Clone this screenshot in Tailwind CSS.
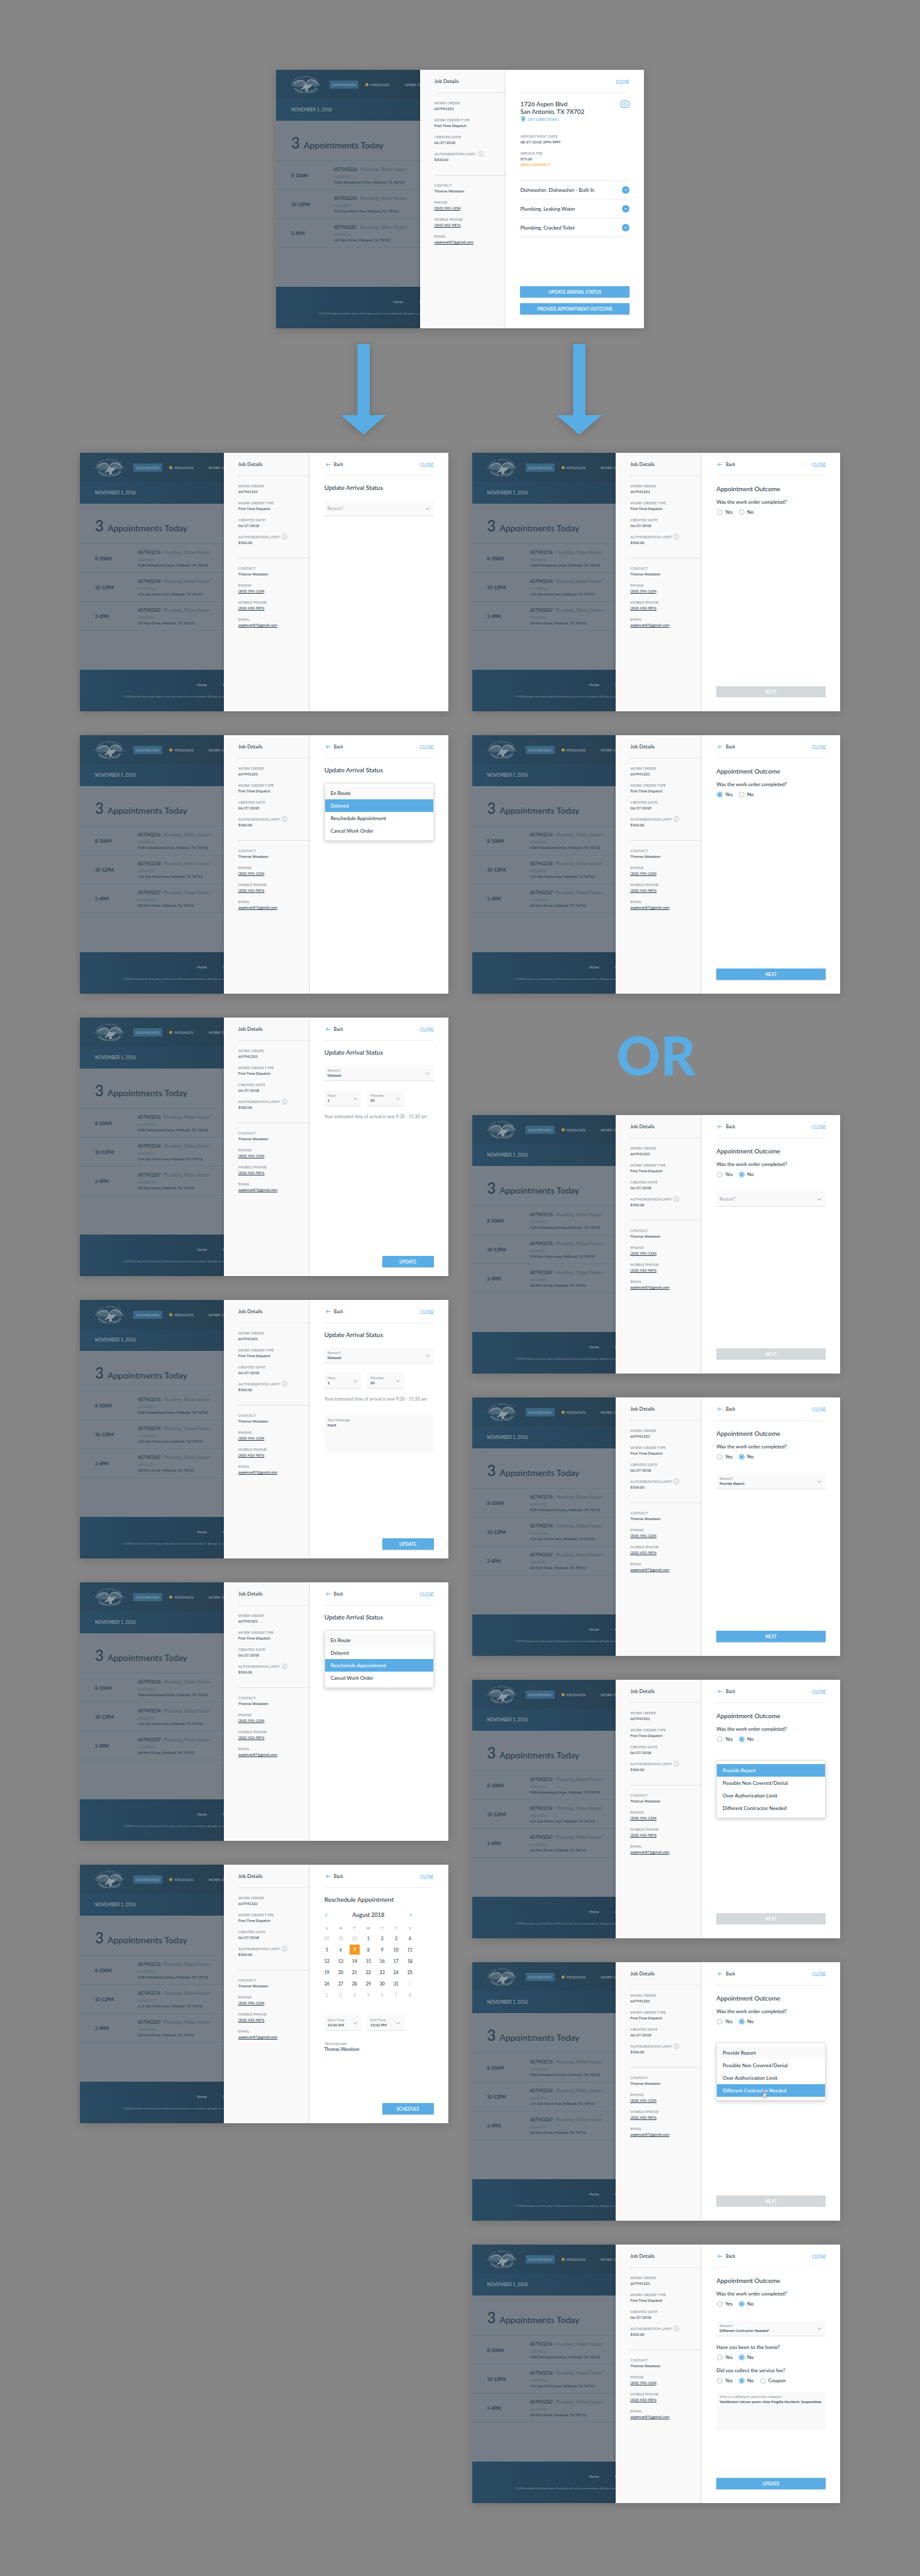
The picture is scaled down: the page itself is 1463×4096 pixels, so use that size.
<!DOCTYPE html>
<html lang="en">
<head>
<meta charset="utf-8">
<meta name="viewport" content="width=device-width, initial-scale=1">
<title>Job Details Flow</title>
<script src="https://cdn.jsdelivr.net/npm/@tailwindcss/browser@4"></script>
</head>
<body class="bg-[#868686] font-[Lato,'Open_Sans',sans-serif] font-medium text-[#2b3c4d]">

<!-- Shared symbols -->
<svg class="hidden" aria-hidden="true">
  <defs><path id="arc" d="M5 25 A58 58 0 0 1 87 25"/></defs>
  <symbol id="eagle" viewBox="0 0 92 60">
    <text font-size="7" fill="currentColor" font-family="Lato, sans-serif" letter-spacing="2"><textPath href="#arc" startOffset="1">FIRST AMERICAN</textPath></text>
    <g fill="none" stroke="currentColor" stroke-linecap="round">
      <path stroke-width="3" d="M8 27C16 19 26 16 36 18c5 2 8 7 10 13M84 27C77 18 68 14 60 16c-6 1-10 6-12 12"/>
      <path stroke-width="1.900" d="M14 23L1 32M18 21L6 35M22 20L11 37M26 19L17 38M30 19l-7 20M34 20l-5 18M38 22l-4 15M41 26l-2 10M78 22l13 10M74 20l12 15M70 18l11 19M66 17l9 20M62 18l7 16M58 20l5 13M54 23l4 9"/>
      <path stroke-width="1.300" d="M12 42c4 8 14 14 30 14M14 46l-4 0M16 48l0-5M20 51l-5 1M22 52l-1-6M27 54l-5 2M29 54l-2-6M34 56l-4 2M36 55l-2-5"/>
      <path stroke-width="1.300" d="M81 42c-4 8-14 14-30 14M79 46l4 0M77 48l0-5M73 51l5 1M71 52l1-6M66 54l5 2M64 54l2-6M59 56l4 2M57 55l2-5"/>
    </g>
    <g fill="currentColor">
      <path d="M45 29c5 0 10 3 15 2 3-2 6-1 8 2l-4 2c-2 4-6 7-11 9l1 6 3 3-5-1-3 2-1-4-3 3-2-3 4-5-5-1-12 4 3-5 6-5c1-4 3-7 6-9z"/>
      <circle cx="46.500" cy="57" r="2"/>
    </g>
  </symbol>
  <symbol id="chev" viewBox="0 0 10 6"><path d="M1 1l4 4 4-4" fill="none" stroke="currentColor" stroke-width="1.700" stroke-linecap="round"/></symbol>
  <symbol id="back" viewBox="0 0 16 14"><path d="M15 7H1.500M7.500 1l-6 6 6 6" fill="none" stroke="currentColor" stroke-width="2"/></symbol>
  <symbol id="info" viewBox="0 0 18 18"><circle cx="9" cy="9" r="8" fill="none" stroke="currentColor" stroke-width="1.500"/><path d="M9 8v5.500M9 4.500v1.800" stroke="currentColor" stroke-width="1.700"/></symbol>
  <symbol id="camera" viewBox="0 0 28 24"><path d="M4 4h4l2-3h8l2 3h4a3 3 0 0 1 3 3v13a3 3 0 0 1-3 3H4a3 3 0 0 1-3-3V7a3 3 0 0 1 3-3z" fill="none" stroke="currentColor" stroke-width="2"/><circle cx="14" cy="13" r="5" fill="none" stroke="currentColor" stroke-width="2"/><path d="M4.500 7.500h2" stroke="currentColor" stroke-width="1.500"/></symbol>
  <symbol id="pin" viewBox="0 0 12 18"><path fill="currentColor" fill-rule="evenodd" d="M6 0a6 6 0 0 1 6 6c0 4-4 8-6 12C4 14 0 10 0 6a6 6 0 0 1 6-6zm0 4a2.200 2.200 0 1 0 0 4.400A2.200 2.200 0 0 0 6 4z"/></symbol>
  <symbol id="down" viewBox="0 0 24 24"><circle cx="12" cy="12" r="12" fill="#59ade4"/><path d="M8 10l4 4 4-4" fill="none" stroke="#fff" stroke-width="2"/></symbol>
  <symbol id="arrow" viewBox="0 0 72 144"><path fill="#59ade4" d="M26.500 0h19.500v113h26L36 144 0 113h26.500z"/></symbol>
  <symbol id="hand" viewBox="0 0 16 22"><path d="M5.500 12V2.500a1.500 1.500 0 0 1 3 0V8c.5-1 2.300-.8 2.500.6.600-.9 2.100-.5 2.200.7.700-.6 1.800 0 1.800 1.200V15c0 3-1.500 4-1.500 6h-7c0-2-2.500-4-4.500-7.500-.8-1.500 1-2.300 2-1.300z" fill="#fff" stroke="#333" stroke-width="1"/><path d="M8 13v5M10.300 13v5M12.600 13v5" stroke="#333" stroke-width=".8"/></symbol>
</svg>

<main class="px-[127px] pt-[111px] pb-[116px]">
  <section id="start" class="mx-auto w-[585px] max-w-full"></section>

  <div class="mt-[25px] flex justify-center gap-[271px] pl-[35px]">
    <svg class="h-[144px] w-[72px] drop-shadow-[0_2px_6px_rgb(0_0_0/0.2)]" role="img" aria-label="Update arrival status flow"><use href="#arrow"/></svg>
    <svg class="h-[144px] w-[72px] drop-shadow-[0_2px_6px_rgb(0_0_0/0.2)]" role="img" aria-label="Appointment outcome flow"><use href="#arrow"/></svg>
  </div>

  <div class="mt-[29px] grid grid-cols-2 items-start gap-[38px]">
    <section id="arrival" class="flex min-w-0 flex-col gap-[38px]"></section>
    <section id="outcome" class="flex min-w-0 flex-col gap-[38px]"></section>
  </div>
</main>

<script>
let uid = 0;
const id = () => 'f' + (++uid);

const job = (n, addr, time) => `
  <li class="grid h-[46px] grid-cols-[68px_1fr] border-b border-[#687580] pl-6">
    <span class="self-center text-[7px] leading-[10px] font-bold">${time}</span>
    <div class="pt-2 whitespace-nowrap">
      <p class="text-[7px] leading-[10px]"><span class="mr-[5px] font-semibold">${n}</span><span class="text-[#525e69]">Plumbing, Water Heater</span></p>
      <p class="mt-[3px] text-[6px] leading-[8px] text-[#59656f]">ADDRESS</p>
      <p class="mt-px text-[6px] leading-[8px]">${addr}</p>
    </div>
  </li>`;

const dashboard = () => `
  <div class="flex min-w-0 flex-col overflow-hidden bg-[#757e87] text-[#2c3d4d]">
    <header class="flex h-[46px] items-center bg-linear-to-r from-[#2a4a60] to-[#284154] pl-6 text-[6px] text-[#99a6af]">
      <svg class="h-[30px] w-[46px] shrink-0 text-[#8d9aa4]" role="img" aria-label="First American"><use href="#eagle"/></svg>
      <nav class="ml-[15px] flex items-center whitespace-nowrap">
        <a href="#" class="flex h-[13px] w-[46px] items-center justify-center rounded-[1px] bg-[#3a6785] text-[#8aa1b1]">DASHBOARD</a>
        <a href="#" class="ml-[11px] flex items-center gap-[3px]"><span class="size-[5px] rounded-full bg-[#b0973f]"></span>MESSAGES</a>
        <a href="#" class="ml-6">WORK ORDERS</a>
      </nav>
    </header>
    <p class="h-[35px] bg-linear-to-r from-[#2b4e66] to-[#28455a] pl-6 text-[7px] leading-[35px] text-[#99a6af]">NOVEMBER 1, 2018</p>
    <h2 class="flex h-[63px] items-baseline gap-[6px] pt-[23px] pl-6 whitespace-nowrap"><span class="text-[24px] leading-[24px]">3</span><span class="text-[14px] leading-[16px]">Appointments Today</span></h2>
    <ul class="border-t border-[#687580]">
      ${job('607943216', '9084 Woodland Drive, Midland, TX 78702', '8-10AM')}
      ${job('607943254', '114 San Marin Ave, Midland, TX 78702', '10-12PM')}
      ${job('607943287', '68 Park Drive, Midland, TX 78702', '2-4PM')}
    </ul>
    <footer class="mt-auto h-[66px] bg-linear-to-r from-[#294b63] to-[#274155] pt-5 whitespace-nowrap text-[#99a6af]">
      <nav class="flex gap-[25px] pl-[186px] text-[6px] leading-[8px]"><a href="#">Home</a><a href="#">Contact</a></nav>
      <p class="mt-[11px] pl-[68px] text-[4px] leading-[8px] text-[#7f8f9b]">© 2018 First American Home Buyers Protection and its licensed subsidiaries. All rights reserved.</p>
    </footer>
  </div>`;

const field = (label, value, extra = '') => `
  <div class="text-[6px] leading-[9px]">
    <dt class="flex h-[9px] items-center gap-[3px] whitespace-nowrap text-[#838c94]">${label}${extra}</dt>
    <dd>${value}</dd>
  </div>`;
const link = (href, t) => `<a href="${href}" class="underline underline-offset-[1px]">${t}</a>`;

const details = () => `
  <aside class="relative min-w-0 bg-[#f9f9f9] pl-[23px] shadow-[0_0_6px_rgb(0_0_0/0.3)]">
    <h3 class="flex h-[37px] items-center border-b border-[#e4e6e7] text-[8px]">Job Details</h3>
    <dl class="flex h-[131px] flex-col gap-[9px] border-b border-[#e0e2e3] pt-[11px]">
      ${field('WORK ORDER', '607941321')}
      ${field('WORK ORDER TYPE', 'First Time Dispatch')}
      ${field('CREATED DATE', '06/27/2018')}
      ${field('AUTHORIZATION LIMIT', '$500.00', '<svg class="size-[9px] text-[#a9aeb2]"><use href="#info"/></svg>')}
    </dl>
    <dl class="flex flex-col gap-[9px] pt-[11px]">
      ${field('CONTACT', 'Thomas Woodson')}
      ${field('PHONE', link('tel:3035901234', '(303) 590-1234'))}
      ${field('MOBILE PHONE', link('tel:2024329876', '(202) 432-9876'))}
      ${field('EMAIL', link('mailto:aspencer87@gmail.com', 'aspencer87@gmail.com'))}
    </dl>
  </aside>`;

const panel = (body, back = true) => `
  <article class="grid min-h-[411px] grid-cols-[229fr_137fr_220fr] overflow-hidden bg-white shadow-[0_2px_14px_rgb(0_0_0/0.18)]">
    ${dashboard()}
    ${details()}
    <div class="relative flex min-w-0 flex-col bg-white px-[23px] shadow-[0_0_4px_rgb(0_0_0/0.15)]">
      <div class="flex h-[37px] shrink-0 items-center border-b border-[#ececed]">
        ${back ? '<button type="button" class="flex items-center gap-[5px] pl-[2px] text-[7px] leading-[10px]"><svg class="h-[7px] w-[8px] text-[#59ade4]"><use href="#back"/></svg>Back</button>' : ''}
        <button type="button" class="ml-auto pt-[2px] text-[7px] leading-[10px] text-[#59ade4]">CLOSE</button>
      </div>
      ${body}
    </div>
  </article>`;

const leftTitle = t => `<h3 class="mt-3 text-[10px] leading-[12px]">${t}</h3>`;

const select = (label, value) => {
  const i = id();
  return value ? `
  <div class="relative flex h-[25px] flex-col justify-center rounded-[1px] border-b border-[#e0e1e2] bg-[#f9f9f9] pl-[5px]">
    <label for="${i}" class="text-[6px] leading-[8px] text-[#959ca2]">${label}</label>
    <select id="${i}" class="w-full appearance-none bg-transparent text-[6px] leading-[8px] font-semibold"><option>${value}</option></select>
    <svg class="pointer-events-none absolute top-[11px] right-[7px] h-[4px] w-[6px] text-[#b0b5b9]"><use href="#chev"/></svg>
  </div>` : `
  <div class="relative flex h-[25px] items-center rounded-[1px] border-b border-[#e0e1e2] bg-[#f9f9f9] pl-[5px]">
    <select aria-label="${label}" class="w-full appearance-none bg-transparent text-[7px] leading-[10px] text-[#a2a8ad]"><option>${label}</option></select>
    <svg class="pointer-events-none absolute top-[11px] right-[7px] h-[4px] w-[6px] text-[#b0b5b9]"><use href="#chev"/></svg>
  </div>`;
};

const menu = (items, active, pointer = '') => `
  <ul role="listbox" class="relative rounded-[2px] border border-[#dfe1e2] bg-white pt-[5px] pb-[5px] shadow-[0_2px_6px_rgb(0_0_0/0.2)]">
    ${items.map((t, i) => `<li role="option" aria-selected="${i === active}" class="${i === active ? 'h-5 bg-[#59ade4] pl-[9px] text-[8px] leading-[20px] text-white' : i === 0 ? 'h-5 bg-[#f9f9f9] pl-[9px] text-[8px] leading-[20px]' : 'h-5 pl-[9px] text-[8px] leading-[20px]'}">${t}</li>`).join('')}
    ${pointer}
  </ul>`;

const radios = (q, opts, checked) => {
  const n = id();
  return `
  <fieldset>
    <legend class="text-[8px] leading-[10px]">${q}</legend>
    <div class="mt-[6px] flex h-[10px] items-center gap-[10px] pl-px text-[8px] leading-[10px]">
      ${opts.map(o => `<label class="flex items-center gap-[4px]"><input type="radio" name="${n}" ${o === checked ? 'checked' : ''} class="size-[9px] appearance-none rounded-full border border-[#b5babd] bg-white checked:border-[#59ade4] checked:bg-[#59ade4] checked:shadow-[inset_0_0_0_1px_#fff]">${o}</label>`).join('')}
    </div>
  </fieldset>`;
};

const textarea = (label, value) => {
  const i = id();
  return `
  <div class="flex h-[61px] flex-col rounded-[1px] bg-[#f9f9f9] pt-[4px] pl-[5px]">
    <label for="${i}" class="text-[6px] leading-[8px] text-[#959ca2]">${label}</label>
    <textarea id="${i}" wrap="off" class="w-full grow resize-none overflow-hidden bg-transparent text-[6px] leading-[8px] font-semibold">${value}</textarea>
  </div>`;
};

const wide = (t, on = true) => `<button type="button" ${on ? '' : 'disabled'} class="${on ? 'h-[18px] w-full rounded-[1px] bg-[#59ade4] text-[7px] leading-[18px] font-semibold text-white shadow-[0_1px_2px_rgb(0_0_0/0.2)]' : 'h-[18px] w-full rounded-[1px] bg-[#d3d8db] text-[7px] leading-[18px] font-semibold text-white'}">${t}</button>`;
const foot = b => `<div class="mt-auto flex flex-col gap-[9px] pb-[22px]">${b}</div>`;
const smallFoot = t => `<div class="mt-auto flex justify-end pb-[14px]"><button type="button" class="h-[18px] w-[82px] rounded-[1px] bg-[#59ade4] text-[7px] leading-[18px] font-semibold text-white shadow-[0_1px_2px_rgb(0_0_0/0.2)]">${t}</button></div>`;

/* Starting screen */
const work = t => `<li class="flex h-[30px] items-center justify-between border-b border-[#e8e9ea] text-[8px]">${t}<button type="button" aria-label="Expand ${t}"><svg class="size-[12px]"><use href="#down"/></svg></button></li>`;
document.getElementById('start').innerHTML = panel(`
  <div class="mt-[11px] flex items-start justify-between">
    <address class="text-[10px] leading-[12px] not-italic">1726 Aspen Blvd<br>San Antonio, TX 78702</address>
    <button type="button" aria-label="Add photo"><svg class="h-[12px] w-[14px] text-[#59ade4]"><use href="#camera"/></svg></button>
  </div>
  <a href="#" class="mt-[2px] flex items-center gap-[4px] pl-[2px] text-[6px] leading-[9px] text-[#59ade4]"><svg class="h-[9px] w-[6px]"><use href="#pin"/></svg>GET DIRECTIONS</a>
  <dl class="mt-[18px] flex flex-col gap-[9px]">
    ${field('APPOINTMENT DATE', '08/27/2018, 2PM-4PM')}
    ${field('SERVICE FEE', '$75.00<br><span class="text-[#f79625]">NEW CONTRACT</span>')}
  </dl>
  <ul class="mt-5 border-t border-[#e8e9ea]">${work('Dishwasher, Dishwasher - Built In')}${work('Plumbing, Leaking Water')}${work('Plumbing, Cracked Toilet')}</ul>
  ${foot(wide('UPDATE ARRIVAL STATUS') + wide('PROVIDE APPOINTMENT OUTCOME'))}
`, false);

/* Left column: arrival status */
const status = ['En Route', 'Delayed', 'Reschedule Appointment', 'Cancel Work Order'];
const box = b => `<div class="mt-[15px]">${b}</div>`;
const delayed = () => leftTitle('Update Arrival Status') + box(select('Reason?', 'Delayed')) +
  `<div class="mt-[15px] flex gap-[9px]"><div class="w-[59px]">${select('Hour', '1')}</div><div class="w-[59px]">${select('Minutes', '30')}</div></div>
   <p class="mt-[11px] text-[7px] leading-[10px] whitespace-nowrap text-[#8d959c]">Your estimated time of arrival is now 9:30 - 11:30 am</p>`;

const days = [[29,30,31,1,2,3,4],[5,6,7,8,9,10,11],[12,13,14,15,16,17,18],[19,20,21,22,23,24,25],[26,27,28,29,30,31,1],[2,3,4,5,6,7,8]];
const cell = (d, r) => {
  const muted = (r === 0 && d > 20) || (r > 3 && d < 10);
  if (r === 1 && d === 7) return '<td class="h-[18px] p-0"><span class="mx-auto block h-4 w-4 bg-[#f79625] leading-4 font-bold text-white">7</span></td>';
  return `<td class="${muted ? 'h-[18px] p-0 text-[#b9bdc1]' : 'h-[18px] p-0'}">${d}</td>`;
};
const calendar = `
  <div class="-ml-[7px] w-[154px]">
    <div class="mt-[13px] flex h-3 items-center justify-between px-[8px] text-[9px] leading-[12px]">
      <button type="button" aria-label="Previous month"><svg viewBox="0 0 6 8" class="h-[6px] w-[4px]"><path d="M5 1L1 4l4 3" fill="none" stroke="#59ade4" stroke-width="1.500"/></svg></button>
      <span>August 2018</span>
      <button type="button" aria-label="Next month"><svg viewBox="0 0 6 8" class="h-[6px] w-[4px]"><path d="M1 1l4 3-4 3" fill="none" stroke="#59ade4" stroke-width="1.500"/></svg></button>
    </div>
    <table class="mt-[8px] w-full table-fixed text-center text-[7px] leading-[9px]">
      <thead><tr class="text-[5px] text-[#9aa0a6]">${'SMTWTFS'.split('').map(d => `<th class="h-[14px] p-0 font-bold">${d}</th>`).join('')}</tr></thead>
      <tbody>${days.map((w, r) => `<tr>${w.map(d => cell(d, r)).join('')}</tr>`).join('')}</tbody>
    </table>
  </div>`;

document.getElementById('arrival').innerHTML = [
  panel(leftTitle('Update Arrival Status') + box(select('Reason?'))),
  panel(leftTitle('Update Arrival Status') + box(menu(status, 1))),
  panel(delayed() + smallFoot('UPDATE')),
  panel(delayed() + `<div class="mt-[21px]">${textarea('Text Message', 'Input')}</div>` + smallFoot('UPDATE')),
  panel(leftTitle('Update Arrival Status') + box(menu(status, 2))),
  panel(leftTitle('Reschedule Appointment') + calendar +
    `<div class="mt-[23px] flex gap-[9px]"><div class="w-[59px]">${select('Start Time', '10:00 AM')}</div><div class="w-[59px]">${select('End Time', '12:00 PM')}</div></div>
     <dl class="mt-4 text-[6px] leading-[9px]"><dt class="text-[#838c94]">TECHNICIAN</dt><dd class="flex items-center"><button type="button" class="relative text-[7px]">Thomas Woodson<svg class="absolute top-[4px] left-[31px] h-[3px] w-[6px] text-[#59ade4]"><use href="#chev"/></svg></button></dd></dl>` +
    smallFoot('SCHEDULE')),
].join('');

/* Right column: appointment outcome */
const reasons = ['Provide Report', 'Possible Non Covered/Denial', 'Over Authorization Limit', 'Different Contractor Needed'];
const yn = ['Yes', 'No'];
const outcome = (checked, rest, btn) => panel(`
  <h3 class="mt-[14px] mb-[10px] text-[10px] leading-[12px]">Appointment Outcome</h3>
  ${radios('Was the work order completed?', yn, checked)}
  ${rest}${foot(btn)}`);
const low = b => `<div class="mt-[22px]">${b}</div>`;
const lowMenu = b => `<div class="mt-[29px]">${b}</div>`;
const next = wide('NEXT'), nextOff = wide('NEXT', false);

document.getElementById('outcome').innerHTML = [
  outcome('', '', nextOff),
  outcome('Yes', '', next),
  '<p class="text-center text-[86px] leading-[117px] font-black text-[#59ade4]">OR</p>',
  outcome('No', low(select('Reason?')), nextOff),
  outcome('No', low(select('Reason?', 'Provide Report')), next),
  outcome('No', lowMenu(menu(reasons, 0)), nextOff),
  outcome('No', lowMenu(menu(reasons, 3, '<svg class="absolute bottom-[3px] left-[71px] h-[12px] w-[9px]"><use href="#hand"/></svg>')), nextOff),
  outcome('No', low(select('Reason?', 'Different Contractor Needed?')) +
    `<div class="mt-3">${radios('Have you been to the home?', yn, 'No')}</div>
     <div class="mt-[11px]">${radios('Did you collect the service fee?', [...yn, 'Coupon'], 'No')}</div>
     <div class="mt-[13px]">${textarea('Why is a different contractor needed?', 'Vestibulum rutrum quam vitae fringilla tincidunt. Suspendisse')}</div>`, wide('UPDATE')),
].join('');
</script>
</body>
</html>
